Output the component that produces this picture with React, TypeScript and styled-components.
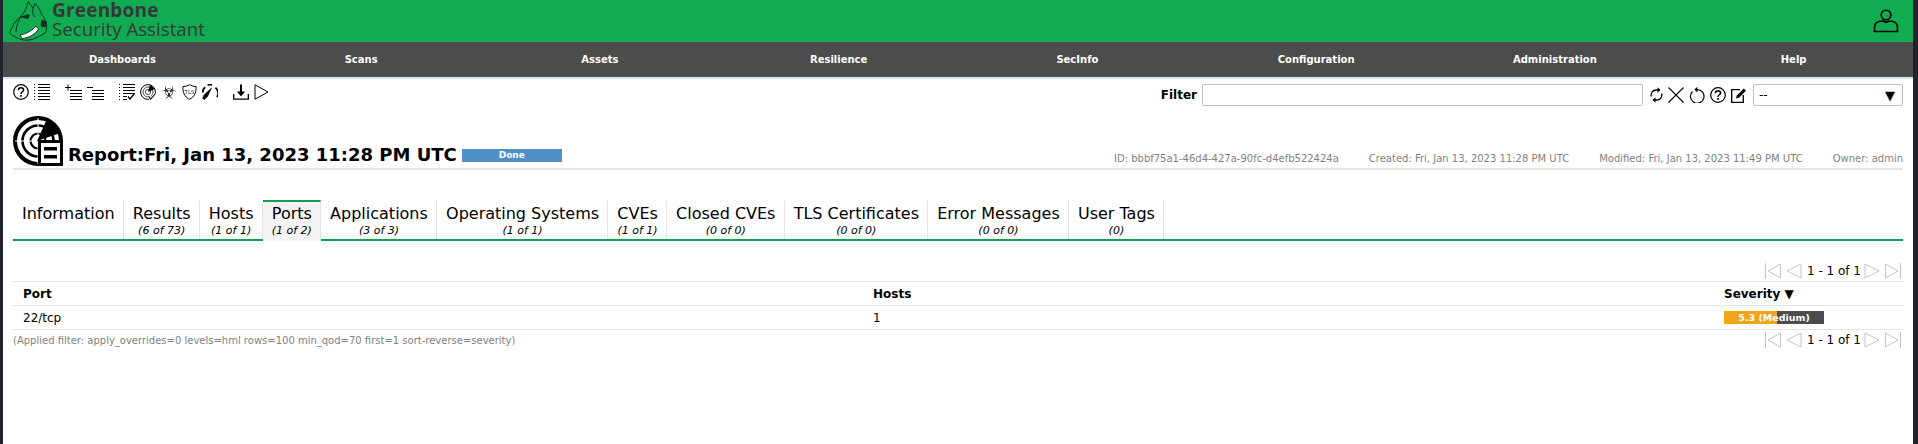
import React from 'react';
import styled, { createGlobalStyle } from 'styled-components';
import { GiBiohazard } from 'react-icons/gi';

const GlobalStyle = createGlobalStyle`
  * {
    box-sizing: border-box;
  }
  html, body {
    margin: 0;
    padding: 0;
    background: #20232e;
    font-family: "DejaVu Sans", sans-serif;
    font-size: 12px;
    color: #000;
  }
`;

const NAV_ITEMS = ['Dashboards', 'Scans', 'Assets', 'Resilience', 'SecInfo', 'Configuration', 'Administration', 'Help'];

const TABS = [
  { title: 'Information' },
  { title: 'Results', count: '(6 of 73)' },
  { title: 'Hosts', count: '(1 of 1)' },
  { title: 'Ports', count: '(1 of 2)', active: true },
  { title: 'Applications', count: '(3 of 3)' },
  { title: 'Operating Systems', count: '(1 of 1)' },
  { title: 'CVEs', count: '(1 of 1)' },
  { title: 'Closed CVEs', count: '(0 of 0)' },
  { title: 'TLS Certificates', count: '(0 of 0)' },
  { title: 'Error Messages', count: '(0 of 0)' },
  { title: 'User Tags', count: '(0)' },
];

const Logo = () => (
  <svg width="43" height="42" viewBox="0 0 43 42" fill="none" stroke="#0b3320" strokeWidth="1">
    <path d="M.5 33C3 26 7 20 12 16C16 12 18 7 19.3 1.7L24 8.3L26 3.3C29 7 32 11 33 15C35 18 37.5 21 37.7 25C38 29 37 32 36 33.3C33 35 29 37 26 38.3C22 40 18 40.5 14.3 40C9 39 4 36 .5 33Z" />
    <path d="M12 16C9 21 7 27 7 32M24 8.3C23 12 24 15 26 17" />
    <path d="M11 35C17 34 24 30 27 26L29.5 29C27 34 20 38 13 38.5Z" fill="#fff" />
    <path d="M12 17L20 14.5L19 18.5Z" fill="#0b3320" />
    <path d="M33 20L37.5 22L36 27L32 26Z" fill="#0b3320" />
  </svg>
);

const UserIcon = () => (
  <svg width="26" height="24" viewBox="0 0 26 24" fill="none" stroke="#000" strokeWidth="1.6">
    <circle cx="13" cy="6" r="4.8" />
    <path d="M10 12C5 12 1.5 14 1.5 18V22.5H24.5V18C24.5 14 21 12 16 12C15 13.5 11 13.5 10 12Z" />
  </svg>
);

const HelpIcon = () => (
  <svg width="16" height="16" viewBox="0 0 16 16" fill="none" stroke="#000">
    <circle cx="8" cy="8" r="7.3" strokeWidth="1.2" />
    <path d="M5.4 6.2C5.4 4.6 6.6 3.7 8 3.7C9.5 3.7 10.6 4.7 10.6 6C10.6 7.8 8 7.8 8 10" strokeWidth="1.5" />
    <path d="M8 11V12.8" strokeWidth="1.7" />
  </svg>
);

const ListIcon = () => (
  <svg width="16" height="16" viewBox="0 0 16 16" stroke="#000" strokeWidth="1">
    {[0.5, 3.5, 6.5, 9.5, 12.5, 15.5].map((y) => (
      <path key={y} d={`M0 ${y}H1M4 ${y}H16`} />
    ))}
  </svg>
);

const FoldIcon = ({ plus }: { plus?: boolean }) => (
  <svg width="17" height="16" viewBox="0 0 17 16" stroke="#000" strokeWidth="1">
    <path d="M0 3.5H6" />
    {plus && <path d="M3 .5V6.5" />}
    {[6.5, 9.5, 12.5, 15.5].map((y) => (
      <path key={y} d={`M5 ${y}H17`} />
    ))}
  </svg>
);

const ResultsIcon = () => (
  <svg width="16" height="16" viewBox="0 0 16 16" stroke="#000" strokeWidth="1" fill="none">
    {[0.5, 3.5, 6.5, 9.5].map((y) => (
      <path key={y} d={`M0 ${y}H1M4 ${y}H16`} />
    ))}
    <path d="M0 12.5H1M0 15.5H1M4 12.5H8M4 15.5H8" />
    <path d="M9 12.5L11 15L15.5 9.5" strokeWidth="1.3" />
  </svg>
);

const RadarSmallIcon = () => (
  <svg width="16" height="16" viewBox="0 0 16 16" fill="none" stroke="#000">
    <circle cx="8" cy="8" r="7.4" strokeWidth="1" />
    <circle cx="8" cy="8" r="5" strokeWidth=".7" />
    <circle cx="8" cy="8" r="2.6" strokeWidth=".7" />
    <path d="M8 8L10 .8L15 5Z" fill="#000" stroke="none" />
    <path d="M8.5 12L10.5 15L15.5 9.5" stroke="#fff" strokeWidth="2.8" />
    <path d="M8.5 12L10.5 15L15.5 9.5" strokeWidth="1.1" />
  </svg>
);

const TlsIcon = () => (
  <svg width="15" height="16" viewBox="0 0 15 16" fill="none" stroke="#000">
    <path d="M1 2.5C4 2.5 6 1.5 7.5 .7C9 1.5 11 2.5 14 2.5C14.5 8 12.5 13 7.5 15.3C2.5 13 .5 8 1 2.5Z" strokeWidth="1" />
    <text x="7.5" y="9.5" textAnchor="middle" fontSize="5.5" fontFamily="DejaVu Sans" fill="#222" stroke="none">TLS</text>
  </svg>
);

const GaugeIcon = () => (
  <svg width="16" height="16" viewBox="0 0 16 16" fill="none" stroke="#000">
    <path d="M.8 8.5A7.5 7.5 0 0 1 3 3.2" strokeWidth="1.8" />
    <path d="M5.5 1.1A7.5 7.5 0 0 1 10 1" strokeWidth="1.6" />
    <path d="M13.5 3.6A7.5 7.5 0 0 1 15 13" strokeWidth="1.8" />
    <path d="M.6 14.5L2 11L9.5 4L5.5 12.5L2.5 15.5Z" fill="#000" strokeWidth=".6" />
  </svg>
);

const DownloadIcon = () => (
  <svg width="16" height="16" viewBox="0 0 16 16" fill="none" stroke="#000">
    <path d="M.7 10V15.2H15.3V10" strokeWidth="1.3" />
    <path d="M8 .5V10" strokeWidth="2" />
    <path d="M4 7.5H12L8 12.5Z" fill="#000" stroke="none" />
  </svg>
);

const PlayIcon = () => (
  <svg width="15" height="16" viewBox="0 0 15 16" fill="none" stroke="#000">
    <path d="M1 .8L14 8L1 15.2Z" strokeWidth="1" />
  </svg>
);

const RefreshIcon = () => (
  <svg width="13" height="16" viewBox="0 0 13 16" fill="none" stroke="#000">
    <path d="M1.4 9.5A5 5 0 0 1 6.5 3H8" strokeWidth="1.3" />
    <path d="M11.6 6.5A5 5 0 0 1 6.5 13H5" strokeWidth="1.3" />
    <path d="M7.5 .3L10.5 3L7.5 5.7Z" fill="#000" stroke="none" />
    <path d="M5.5 10.3L2.5 13L5.5 15.7Z" fill="#000" stroke="none" />
  </svg>
);

const CloseIcon = () => (
  <svg width="16" height="16" viewBox="0 0 16 16" stroke="#000" strokeWidth="1.1">
    <path d="M.5 .5L15.5 15.5M15.5 .5L.5 15.5" />
  </svg>
);

const ResetIcon = () => (
  <svg width="16" height="16" viewBox="0 0 16 16" fill="none" stroke="#000">
    <path d="M3.5 4.5A6.8 6.8 0 1 0 8 2.6H7" strokeWidth="1.2" />
    <path d="M8.5 -.2L5.3 2.6L8.5 5.4Z" fill="#000" stroke="none" />
  </svg>
);

const EditIcon = () => (
  <svg width="16" height="16" viewBox="0 0 16 16" fill="none" stroke="#000">
    <path d="M9 2.6H.7V15.3H12.3V8" strokeWidth="1.3" />
    <path d="M5 11.5L5.8 8.5L12.8 1.5L15 3.7L8 10.7Z" fill="#000" stroke="none" />
  </svg>
);

const ReportIcon = () => (
  <svg width="50" height="50" viewBox="0 0 50 50" fill="none" stroke="#000">
    <circle cx="25" cy="25" r="23" strokeWidth="4" />
    <circle cx="25" cy="25" r="15.5" strokeWidth="2.6" />
    <circle cx="25" cy="25" r="7.5" strokeWidth="2.2" />
    <path d="M25 2V48M2 25H48" stroke="#fff" strokeWidth="1" />
    <path d="M24 25L34 3A24 24 0 0 1 47.5 17Z" fill="#000" stroke="none" />
    <rect x="25" y="24" width="25" height="26" fill="#000" stroke="none" />
    <rect x="28" y="27" width="19" height="20" fill="#fff" stroke="none" />
    <rect x="31" y="31" width="13" height="3.5" fill="#000" stroke="none" />
    <rect x="31" y="39" width="13" height="3.5" fill="#000" stroke="none" />
  </svg>
);

const FirstIcon = () => (
  <svg width="16" height="16" viewBox="0 0 16 16" fill="none" stroke="#c4c4c4" strokeWidth="1">
    <path d="M.5 0V16M15.5 1L3 8L15.5 15Z" />
  </svg>
);
const PrevIcon = () => (
  <svg width="16" height="16" viewBox="0 0 16 16" fill="none" stroke="#c4c4c4" strokeWidth="1">
    <path d="M15 1L1 8L15 15Z" />
  </svg>
);
const NextIcon = () => (
  <svg width="16" height="16" viewBox="0 0 16 16" fill="none" stroke="#c4c4c4" strokeWidth="1">
    <path d="M1 1L15 8L1 15Z" />
  </svg>
);
const LastIcon = () => (
  <svg width="16" height="16" viewBox="0 0 16 16" fill="none" stroke="#c4c4c4" strokeWidth="1">
    <path d="M15.5 0V16M.5 1L13 8L.5 15Z" />
  </svg>
);

const Pagination = () => (
  <Pager>
    <FirstIcon />
    <PrevIcon />
    <PagerText>1 - 1 of 1</PagerText>
    <NextIcon />
    <LastIcon />
  </Pager>
);

const App: React.FC = () => {
  return (
    <Page>
      <GlobalStyle />
      <Header>
        <LogoBox>
          <Logo />
          <LogoText>
            <LogoName>Greenbone</LogoName>
            <LogoProduct>Security Assistant</LogoProduct>
          </LogoText>
        </LogoBox>
        <UserIcon />
      </Header>
      <Nav>
        {NAV_ITEMS.map((item) => (
          <NavItem key={item}>{item}</NavItem>
        ))}
      </Nav>
      <Toolbar>
        <Tools>
          <ToolGroup>
            <HelpIcon />
            <ListIcon />
          </ToolGroup>
          <ToolGroup>
            <FoldIcon plus />
            <FoldIcon />
          </ToolGroup>
          <ToolGroup>
            <ResultsIcon />
            <RadarSmallIcon />
            <GiBiohazard size={16} color="#222" />
            <TlsIcon />
            <GaugeIcon />
          </ToolGroup>
          <ToolGroup>
            <DownloadIcon />
            <PlayIcon />
          </ToolGroup>
        </Tools>
        <FilterBox>
          <FilterLabel>Filter</FilterLabel>
          <FilterInput />
          <FilterIcons>
            <RefreshIcon />
            <CloseIcon />
            <ResetIcon />
            <HelpIcon />
            <EditIcon />
          </FilterIcons>
          <FilterSelect>
            <span>--</span>
            <SelectArrow>▼</SelectArrow>
          </FilterSelect>
        </FilterBox>
      </Toolbar>
      <Content>
        <ReportHeader>
          <ReportTitle>
            <ReportIcon />
            <TitleText>Report:Fri, Jan 13, 2023 11:28 PM UTC</TitleText>
            <StatusBar>Done</StatusBar>
          </ReportTitle>
          <ReportMeta>
            <span>ID: bbbf75a1-46d4-427a-90fc-d4efb522424a</span>
            <span>Created: Fri, Jan 13, 2023 11:28 PM UTC</span>
            <span>Modified: Fri, Jan 13, 2023 11:49 PM UTC</span>
            <span>Owner: admin</span>
          </ReportMeta>
        </ReportHeader>
        <TabBar>
          {TABS.map((tab) => (
            <Tab key={tab.title} $active={tab.active}>
              <TabTitle>{tab.title}</TabTitle>
              {tab.count && <TabCount>{tab.count}</TabCount>}
            </Tab>
          ))}
        </TabBar>
        <TopPager>
          <Pagination />
        </TopPager>
        <Table>
          <TableRow>
            <HeadCell>Port</HeadCell>
            <HeadCell>Hosts</HeadCell>
            <HeadCell>Severity ▼</HeadCell>
          </TableRow>
          <TableRow>
            <Cell>22/tcp</Cell>
            <Cell>1</Cell>
            <Cell>
              <SeverityBar>
                <SeverityFill style={{ width: '53%' }} />
                <SeverityLabel>5.3 (Medium)</SeverityLabel>
              </SeverityBar>
            </Cell>
          </TableRow>
        </Table>
        <Footer>
          <AppliedFilter>(Applied filter: apply_overrides=0 levels=hml rows=100 min_qod=70 first=1 sort-reverse=severity)</AppliedFilter>
          <Pagination />
        </Footer>
      </Content>
    </Page>
  );
};

export default App;

const Page = styled.div`
  margin: 0 5px 0 3px;
  min-height: 444px;
  background: #fff;
  overflow: hidden;
`;

const Header = styled.div`
  display: flex;
  align-items: center;
  justify-content: space-between;
  height: 42px;
  padding: 0 14px 0 6px;
  background: #11ab51;
`;

const LogoBox = styled.div`
  display: flex;
  align-items: center;
`;

const LogoText = styled.div`
  display: flex;
  flex-direction: column;
  padding-bottom: 3px;
  color: #333a37;
  font-family: 'Open Sans', sans-serif;
`;

const LogoName = styled.div`
  font-size: 19px;
  line-height: 18px;
  font-weight: 700;
  letter-spacing: 0.2px;
`;

const LogoProduct = styled.div`
  font-size: 18.7px;
  line-height: 19px;
`;

const Nav = styled.div`
  display: grid;
  grid-template-columns: repeat(8, 1fr);
  height: 37px;
  background: #4c4c4c;
  border-bottom: 2px solid #d8e3f5;
`;

const NavItem = styled.div`
  display: flex;
  align-items: center;
  justify-content: center;
  color: #fff;
  font-size: 10px;
  font-weight: 700;
`;

const Toolbar = styled.div`
  display: flex;
  justify-content: space-between;
  padding: 5px 10px 0;
  height: 30px;
`;

const Tools = styled.div`
  display: flex;
  gap: 15px;
  height: 16px;
`;

const ToolGroup = styled.div`
  display: flex;
  gap: 5px;
`;

const FilterBox = styled.div`
  display: flex;
  align-items: center;
  height: 22px;
`;

const FilterLabel = styled.div`
  font-size: 12px;
  font-weight: 700;
  margin-right: 5px;
`;

const FilterInput = styled.div`
  width: 441px;
  height: 22px;
  border: 1px solid #bfbfbf;
  border-radius: 2px;
`;

const FilterIcons = styled.div`
  display: flex;
  align-items: center;
  gap: 5px;
  margin: 0 6px 0 7px;
`;

const FilterSelect = styled.div`
  display: flex;
  align-items: center;
  justify-content: space-between;
  width: 150px;
  height: 22px;
  padding: 0 7px 0 5px;
  border: 1px solid #bfbfbf;
  border-radius: 2px;
  font-size: 12px;
`;

const SelectArrow = styled.span`
  font-size: 13px;
`;

const Content = styled.div`
  padding: 0 10px;
`;

const ReportHeader = styled.div`
  display: flex;
  align-items: flex-end;
  justify-content: space-between;
  height: 54px;
  margin-top: 7px;
  padding-bottom: 2px;
  border-bottom: 2px solid #e5e5e5;
`;

const ReportTitle = styled.div`
  display: flex;
  align-items: flex-end;
`;

const TitleText = styled.div`
  margin: 0 5px;
  font-size: 18px;
  line-height: 22px;
  font-weight: 700;
`;

const StatusBar = styled.div`
  width: 100px;
  height: 13px;
  margin-bottom: 4px;
  background: #4f91c7;
  color: #fff;
  font-size: 9px;
  line-height: 13px;
  font-weight: 700;
  text-align: center;
`;

const ReportMeta = styled.div`
  display: flex;
  gap: 30px;
  color: #7f7f7f;
  font-size: 10px;
  line-height: 12px;
  padding-bottom: 1px;
`;

const TabBar = styled.div`
  display: flex;
  margin-top: 30px;
  height: 41px;
  border-bottom: 2px solid #11a04d;
`;

const Tab = styled.div<{ $active?: boolean }>`
  display: flex;
  flex-direction: column;
  align-items: center;
  padding: 2px 8.2px 0 9px;
  border-top: 2px solid ${({ $active }) => ($active ? '#11a04d' : 'transparent')};
  border-right: 1px solid #e5e5e5;
  height: ${({ $active }) => ($active ? '41px' : '39px')};
  background: ${({ $active }) => ($active ? '#f3f3f3' : 'transparent')};
`;

const TabTitle = styled.div`
  font-size: 16px;
  line-height: 20px;
`;

const TabCount = styled.div`
  font-size: 11px;
  line-height: 14px;
  font-style: italic;
`;

const Pager = styled.div`
  display: flex;
  align-items: center;
  gap: 5px;
`;

const PagerText = styled.div`
  font-size: 12px;
  margin-right: -2px;
`;

const TopPager = styled.div`
  display: flex;
  justify-content: flex-end;
  align-items: flex-end;
  height: 40px;
  padding: 0 2px 2px 0;
`;

const Table = styled.div`
  border-bottom: 1px solid #e5e5e5;
`;

const TableRow = styled.div`
  display: grid;
  grid-template-columns: 850px 851px 1fr;
  align-items: center;
  height: 24px;
  border-top: 1px solid #e5e5e5;
`;

const HeadCell = styled.div`
  padding-left: 10px;
  font-size: 12px;
  font-weight: 700;
`;

const Cell = styled.div`
  padding-left: 10px;
  font-size: 12px;
`;

const SeverityBar = styled.div`
  position: relative;
  width: 100px;
  height: 13px;
  background: #4c4c4c;
`;

const SeverityFill = styled.div`
  height: 100%;
  background: #f0a519;
`;

const SeverityLabel = styled.div`
  position: absolute;
  inset: 0;
  color: #fff;
  font-size: 9.5px;
  line-height: 13px;
  font-weight: 700;
  text-align: center;
`;

const Footer = styled.div`
  display: flex;
  align-items: center;
  justify-content: space-between;
  height: 20px;
  padding-right: 2px;
`;

const AppliedFilter = styled.div`
  color: #7f7f7f;
  font-size: 10px;
`;
